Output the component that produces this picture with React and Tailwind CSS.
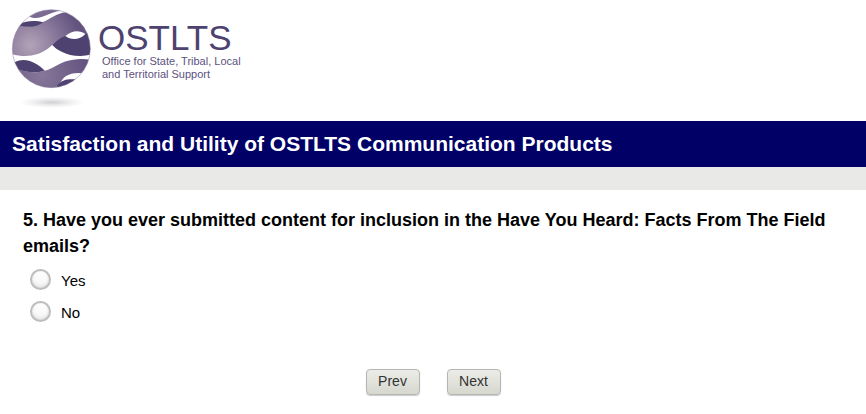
import React, { useState } from 'react';

function Globe() {
  return (
    <svg className="w-[92px] h-[108px] shrink-0" viewBox="0 0 276 324" aria-hidden="true">
      <defs>
        <radialGradient id="band" gradientUnits="userSpaceOnUse" cx="92" cy="136" r="150">
          <stop offset="0" stopColor="#b3a3b8" />
          <stop offset="0.5" stopColor="#8b7a9c" />
          <stop offset="1" stopColor="#63537f" />
        </radialGradient>
        <radialGradient id="lower" gradientUnits="userSpaceOnUse" cx="125" cy="225" r="140">
          <stop offset="0" stopColor="#877799" />
          <stop offset="1" stopColor="#63537f" />
        </radialGradient>
        <radialGradient id="shadow">
          <stop offset="0" stopColor="#cfcfd1" />
          <stop offset="0.5" stopColor="#ececee" />
          <stop offset="1" stopColor="#ffffff" />
        </radialGradient>
        <clipPath id="ball">
          <circle cx="154" cy="146" r="117" />
        </clipPath>
      </defs>
      <ellipse cx="156" cy="307" rx="98" ry="17" fill="url(#shadow)" />
      <g clipPath="url(#ball)">
        <rect x="30" y="20" width="246" height="246" fill="#fff" />
        <path d="M88 50 C122 64 142 36 186 32 L160 20 L100 30 Z" fill="#7d6c92" />
        <path d="M156 134 C172 118 186 106 196 108 C212 121 240 121 256 102 L276 95 L276 163 C243 173 208 167 185 155 C173 149 164 143 156 134 Z" fill="#4e4270" />
        <path d="M30 94 L60 73 C90 86 116 73 134 64 C160 51 178 35 214 36 L276 60 L276 106 L256 102 C240 90 216 90 196 108 C177 114 163 130 145 145 C116 168 75 174 36 162 Z" fill="url(#band)" />
        <path d="M58 73 C78 61 108 61 130 67 C108 84 84 81 58 77 Z" fill="#4e4270" />
        <path d="M44 187 C74 171 107 185 134 212 C108 222 76 216 48 206 Z" fill="#4e4270" />
        <path d="M40 202 C80 221 112 218 134 212 C162 205 185 182 220 179 C240 176 260 177 276 181 L265 222 C235 216 213 218 197 229 C186 237 180 252 166 270 L82 266 Z" fill="url(#lower)" />
        <path d="M172 256 C188 235 208 237 232 238 L210 266 L172 266 Z" fill="#4e4270" />
      </g>
      <circle cx="154" cy="146" r="117" fill="none" stroke="#8a7da0" strokeWidth="1.5" />
    </svg>
  );
}

function App() {
  const [answer, setAnswer] = useState('');

  return (
    <div className="min-h-screen bg-white text-black font-['Liberation_Sans',Arial,sans-serif]">
      {/* LOGO */}
      <header className="flex pb-[13px]">
        <Globe />
        <div className="pl-1.5 pt-5 text-[#4e4270]">
          <p className="text-[35px] leading-[35px]">OSTLTS</p>
          <p className="pl-1 text-[11px] leading-[13px] text-[#5c5280]">
            Office for State, Tribal, Local
            <br />
            and Territorial Support
          </p>
        </div>
      </header>

      <div className="bg-[#000066] px-3 py-2">
        <h1 className="text-[21px] leading-[30px] font-bold text-white">
          Satisfaction and Utility of OSTLTS Communication Products
        </h1>
      </div>
      <div className="h-[23px] bg-[#e9e9e7]"></div>

      <form onSubmit={(e) => e.preventDefault()}>
        {/* QUESTION */}
        <fieldset className="px-[23px] pt-[17px]">
          <legend className="contents">
            <span className="block text-lg leading-[26px] font-bold">
              5. Have you ever submitted content for inclusion in the Have You Heard: Facts From The Field emails?
            </span>
          </legend>
          <div className="flex flex-col gap-2 pt-2 pl-[7px]">
            {['Yes', 'No'].map((option) => (
              <label key={option} className="flex items-center gap-2.5 text-[15px] leading-5">
                <input
                  type="radio"
                  name="submitted"
                  value={option}
                  checked={answer === option}
                  onChange={(e) => setAnswer(e.target.value)}
                  className="size-[21px] appearance-none rounded-full border-2 border-[#bdbdbd] bg-linear-to-b from-white to-[#f4f4f4] shadow-[inset_0_-1px_3px_#d6d6d6] checked:border-[6px] checked:border-[#000066]"
                />
                <span className="pt-1">{option}</span>
              </label>
            ))}
          </div>
        </fieldset>

        {/* BUTTONS */}
        <div className="flex justify-center gap-[27px] pt-[46px]">
          <button
            type="button"
            className="h-[26px] w-[54px] pb-0.5 rounded border border-[#b5b5b1] bg-linear-to-b from-[#ebece7] to-[#d6d8cf] text-sm leading-5 text-[#333333] shadow-[0_1px_1px_#cccccc]"
          >
            Prev
          </button>
          <button
            type="submit"
            className="h-[26px] w-[54px] pb-0.5 rounded border border-[#b5b5b1] bg-linear-to-b from-[#ebece7] to-[#d6d8cf] text-sm leading-5 text-[#333333] shadow-[0_1px_1px_#cccccc]"
          >
            Next
          </button>
        </div>
      </form>
    </div>
  );
}

export default App;
